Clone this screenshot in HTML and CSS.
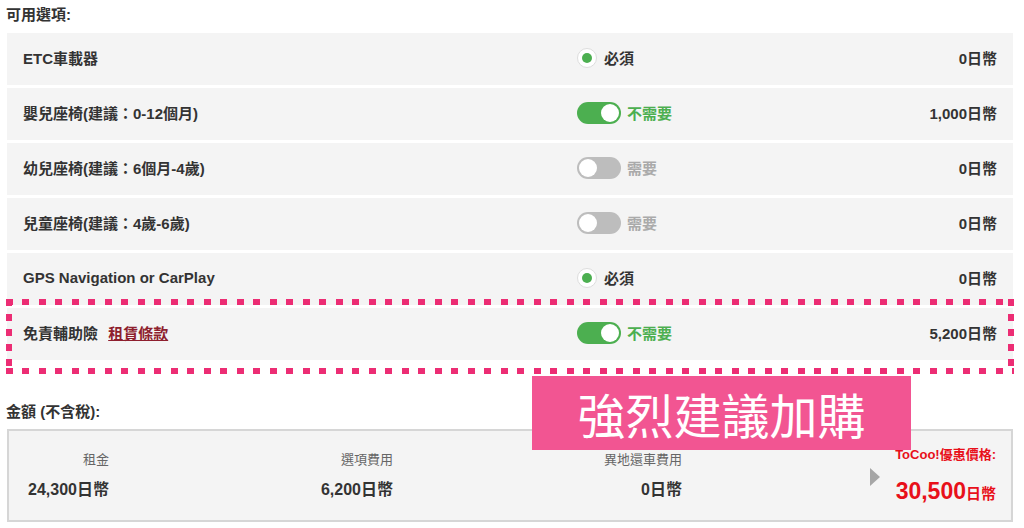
FILE: index.html
```html
<!DOCTYPE html>
<html lang="zh-Hant">
  <head>
    <meta charset="UTF-8" />
    <meta name="viewport" content="width=device-width, initial-scale=1.0" />
    <title>可用選項</title>
    <link rel="stylesheet" href="styles.css">
  </head>
  <body>
    <div class="page">
      <h3 class="title">可用選項:</h3>
      <div class="options">
        <div class="row">
          <div class="name">ETC車載器</div>
          <div class="choice"><span class="radio"></span><span class="must">必須</span></div>
          <div class="price">0日幣</div>
        </div>
        <div class="row">
          <div class="name">嬰兒座椅(建議：0-12個月)</div>
          <div class="choice"><span class="toggle on"></span><span class="on-text">不需要</span></div>
          <div class="price">1,000日幣</div>
        </div>
        <div class="row">
          <div class="name">幼兒座椅(建議：6個月-4歲)</div>
          <div class="choice"><span class="toggle"></span><span class="off-text">需要</span></div>
          <div class="price">0日幣</div>
        </div>
        <div class="row">
          <div class="name">兒童座椅(建議：4歲-6歲)</div>
          <div class="choice"><span class="toggle"></span><span class="off-text">需要</span></div>
          <div class="price">0日幣</div>
        </div>
        <div class="row">
          <div class="name">GPS Navigation or CarPlay</div>
          <div class="choice"><span class="radio"></span><span class="must">必須</span></div>
          <div class="price">0日幣</div>
        </div>
        <div class="row">
          <div class="name">免責輔助險 <a href="#" class="terms">租賃條款</a></div>
          <div class="choice"><span class="toggle on"></span><span class="on-text">不需要</span></div>
          <div class="price">5,200日幣</div>
        </div>
      </div>

      <h3 class="title total-title">金額 (不含稅):</h3>
      <div class="summary">
        <div class="cell">
          <div class="label">租金</div>
          <div class="value">24,300日幣</div>
        </div>
        <div class="cell">
          <div class="label">選項費用</div>
          <div class="value">6,200日幣</div>
        </div>
        <div class="cell">
          <div class="label">異地還車費用</div>
          <div class="value">0日幣</div>
        </div>
        <div class="final">
          <span class="arrow"></span>
          <div class="deal">
            <div class="deal-label">ToCoo!優惠價格:</div>
            <div class="deal-price">30,500<small>日幣</small></div>
          </div>
        </div>
      </div>

      <div class="highlight"></div>
      <div class="banner">強烈建議加購</div>
    </div>
  </body>
</html>
```

FILE: styles.css
```css
* {
  padding: 0;
  margin: 0;
  box-sizing: border-box;
}
body {
  font-family: "Liberation Sans", "Noto Sans CJK TC", sans-serif;
  color: #333;
  background: #fff;
}
.page {
  position: relative;
  padding: 5px 11px 0 7px;
}
.title {
  font-size: 15px;
  line-height: 20px;
  font-weight: 700;
  margin-left: -1px;
  margin-bottom: 8px;
}
.options {
  display: flex;
  flex-direction: column;
  gap: 3px;
}
.row {
  display: grid;
  grid-template-columns: 554px 1fr auto;
  align-items: center;
  height: 52px;
  padding: 0 16px 3px;
  background: #f4f4f4;
  font-size: 15px;
  font-weight: 700;
}
.terms {
  color: #8e1f2e;
  margin-left: 6px;
}
.choice {
  display: flex;
  align-items: center;
}
.radio {
  width: 20px;
  height: 20px;
  border-radius: 50%;
  background: #fff;
  border: 1px solid #ddd;
  position: relative;
  margin-right: 7px;
}
.radio::after {
  content: "";
  position: absolute;
  left: 4px;
  top: 4px;
  width: 10px;
  height: 10px;
  border-radius: 50%;
  background: #4caf50;
}
.toggle {
  width: 44px;
  height: 22px;
  border-radius: 11px;
  background: #bdbdbd;
  position: relative;
  margin-right: 6px;
}
.toggle::after {
  content: "";
  position: absolute;
  top: 2px;
  left: 2px;
  width: 18px;
  height: 18px;
  border-radius: 50%;
  background: #fff;
}
.toggle.on {
  background: #4caf50;
}
.toggle.on::after {
  left: 24px;
}
.on-text {
  color: #4caf50;
}
.off-text {
  color: #aaa;
}
.price {
  text-align: right;
}
.total-title {
  margin-top: 42px;
  margin-bottom: 7px;
}
.summary {
  display: grid;
  grid-template-columns: 84px 284px 289px 1fr;
  height: 93px;
  padding: 16px 15px 0 16px;
  background: #f4f4f4;
  border: 2px solid #d6d6d6;
}
.cell {
  text-align: right;
  padding-top: 5px;
}
.label {
  font-size: 13px;
  line-height: 16px;
  color: #666;
}
.value {
  font-size: 16px;
  line-height: 20px;
  font-weight: 700;
  margin-top: 12px;
}
.final {
  display: flex;
  justify-content: flex-end;
  align-items: flex-start;
  gap: 15px;
}
.arrow {
  width: 0;
  height: 0;
  margin-top: 21px;
  border-top: 9px solid transparent;
  border-bottom: 9px solid transparent;
  border-left: 10px solid #a6a6a6;
}
.deal {
  text-align: right;
  color: #e8101a;
  font-weight: 700;
}
.deal-label {
  font-size: 13px;
  line-height: 16px;
}
.deal-price {
  font-size: 23px;
  line-height: 28px;
  margin-top: 14px;
}
.deal-price small {
  font-size: 15px;
}
.highlight {
  position: absolute;
  left: 6px;
  top: 299px;
  width: 1008px;
  height: 75px;
  background:
    repeating-linear-gradient(90deg, #ec2d74 0 7px, transparent 7px 16.5px) left top / 100% 6px no-repeat,
    repeating-linear-gradient(90deg, #ec2d74 0 7px, transparent 7px 16.5px) left bottom / 100% 6px no-repeat,
    repeating-linear-gradient(180deg, #ec2d74 0 7px, transparent 7px 15px) left top / 6px 100% no-repeat,
    repeating-linear-gradient(180deg, #ec2d74 0 7px, transparent 7px 15px) right top / 6px 100% no-repeat;
}
.banner {
  position: absolute;
  left: 532px;
  top: 376px;
  width: 379px;
  height: 74px;
  background: #f25592;
  color: #fff;
  font-family: "Noto Sans CJK TC", sans-serif;
  font-weight: 400;
  font-size: 48px;
  line-height: 74px;
  text-align: center;
}
```
